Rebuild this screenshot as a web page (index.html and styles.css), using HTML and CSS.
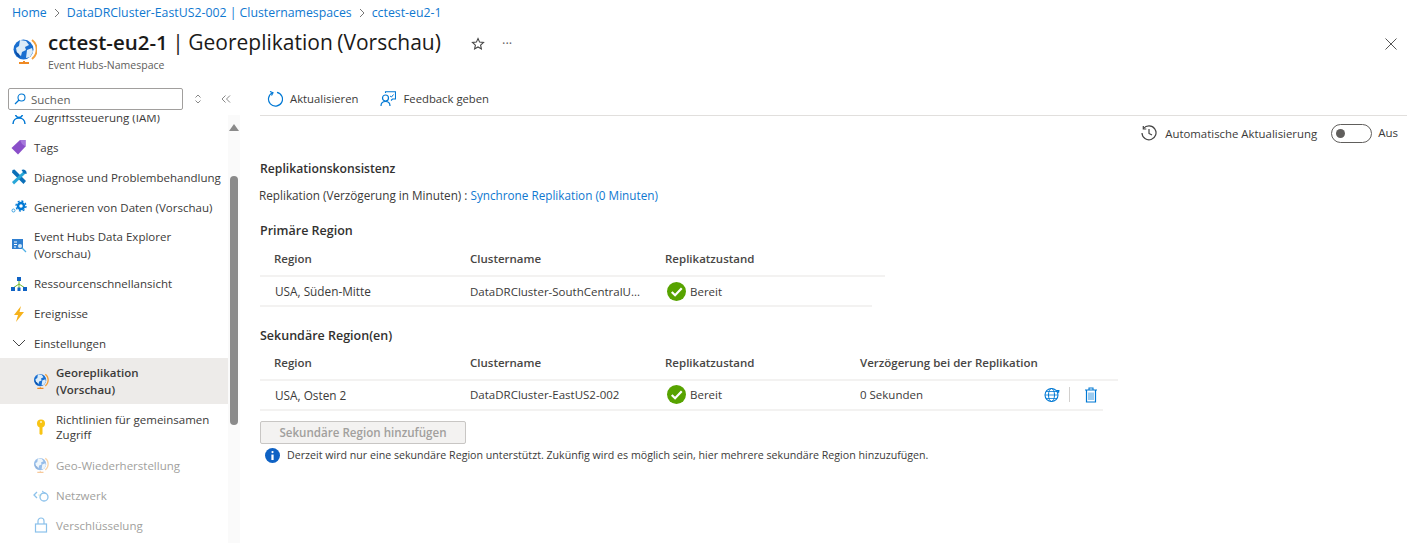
FILE: index.html
```html
<!DOCTYPE html>
<html lang="de">
<head>
    <meta charset="UTF-8">
    <title>cctest-eu2-1 | Georeplikation (Vorschau)</title>
    <link rel="stylesheet" href="styles.css">
</head>
<body>
    <svg width="0" height="0" class="defs">
        <symbol id="globe" viewBox="0 0 24 26">
            <path d="M19 2a12 12 0 0 1 0 19" fill="none" stroke="#f2a03d" stroke-width="2"/>
            <path d="M11 23v2M6 25h10" stroke="#ef8a24" stroke-width="2"/>
            <circle cx="10.5" cy="11.5" r="10" fill="#1a6fd0"/>
            <path d="M7 2l6 1 3 4-4 2 1 3-4 2-1 4-4-3-1-5 3-2zM14 12l5-2 1 4-3 5-4 1z" fill="#dcecf8"/>
            <path d="M1 12l3 6 3 2-1-4z" fill="#0b4fa8"/>
        </symbol>
    </svg>

    <nav class="breadcrumb">
        <a>Home</a>
        <svg class="crumb-sep" viewBox="0 0 6 10"><path d="M1 1l4 4-4 4" fill="none" stroke="#777" stroke-width="1"/></svg>
        <a>DataDRCluster-EastUS2-002 | Clusternamespaces</a>
        <svg class="crumb-sep" viewBox="0 0 6 10"><path d="M1 1l4 4-4 4" fill="none" stroke="#777" stroke-width="1"/></svg>
        <a>cctest-eu2-1</a>
    </nav>

    <header class="page-header">
        <svg class="header-icon"><use href="#globe"/></svg>
        <div class="header-titles">
            <h1><b>cctest-eu2-1</b> | Georeplikation (Vorschau)</h1>
            <div class="header-sub">Event Hubs-Namespace</div>
        </div>
        <svg class="star" viewBox="0 0 14 14"><path d="M7 1.5l1.600 3.600 3.900.4-2.900 2.600.8 3.800L7 10l-3.400 1.900.8-3.800L1.500 5.500l3.900-.4z" fill="none" stroke="#444" stroke-width="1.1"/></svg>
        <span class="dots">&#183;&#183;&#183;</span>
        <svg class="close" viewBox="0 0 12 12"><path d="M.5.5l11 11M11.500.5l-11 11" stroke="#555" stroke-width="1"/></svg>
    </header>

    <div class="main">
        <aside class="sidebar">
            <div class="search-row">
                <div class="search">
                    <svg viewBox="0 0 12 12" class="search-icon"><circle cx="7.5" cy="4.500" r="3.500" fill="none" stroke="#0078d4" stroke-width="1.1"/><path d="M5 7l-4 4" stroke="#0078d4" stroke-width="1.2"/></svg>
                    Suchen
                </div>
                <svg class="sort" viewBox="0 0 8 10"><path d="M1.500 3.500L4 1l2.500 2.500M1.500 6.500L4 9l2.500-2.500" fill="none" stroke="#888" stroke-width="1"/></svg>
                <svg class="collapse" viewBox="0 0 10 10"><path d="M4.500 1.500L1 5l3.500 3.500M9 1.500L5.500 5 9 8.500" fill="none" stroke="#888" stroke-width="1"/></svg>
            </div>
            <div class="menu-wrap">
                <ul class="menu">
                    <li class="menu-item">
                        <svg viewBox="0 0 16 16"><circle cx="8" cy="5" r="3.5" fill="none" stroke="#0078d4" stroke-width="1.5"/><path d="M2 15c0-4 3-6 6-6s6 2 6 6" fill="none" stroke="#0078d4" stroke-width="1.5"/></svg>
                        <span>Zugriffssteuerung (IAM)</span>
                    </li>
                    <li class="menu-item">
                        <svg viewBox="0 0 16 16"><path d="M9 1h5.500v6.500L7 15.500 .5 9z" fill="#8a4fc9"/><path d="M9 1h5.500v6.500L11 5z" fill="#a678dc"/></svg>
                        <span>Tags</span>
                    </li>
                    <li class="menu-item">
                        <svg viewBox="0 0 16 16"><path d="M1.500 1l2-.5L15 12l-2.500 3L1 3.500z" fill="#0b6fb8"/><path d="M13.500 1.500L1 13l2 2.500L15 4z" fill="#29a7d8"/><path d="M10.500 1a3.500 3.500 0 0 1 5 4l-3-1z" fill="#0b6fb8"/></svg>
                        <span>Diagnose und Problembehandlung</span>
                    </li>
                    <li class="menu-item">
                        <svg viewBox="0 0 16 16"><circle cx="10" cy="7" r="3" fill="none" stroke="#0078d4" stroke-width="2.5"/><circle cx="10" cy="7" r="5" fill="none" stroke="#0078d4" stroke-width="1.3" stroke-dasharray="2 1.9"/><circle cx="2.500" cy="11.5" r="1.5" fill="none" stroke="#3aa0e0"/></svg>
                        <span>Generieren von Daten (Vorschau)</span>
                    </li>
                    <li class="menu-item tall">
                        <svg viewBox="0 0 16 16"><path d="M1 2h11v10H1z" fill="#2f7fd0"/><path d="M3 5h3M3 7.500h3M3 10h2" stroke="#fff" stroke-width="1"/><circle cx="9" cy="9" r="2" fill="#cfe7f7"/><path d="M11 11l4 4" stroke="#4fb0e6" stroke-width="1.3"/></svg>
                        <span>Event Hubs Data Explorer<br>(Vorschau)</span>
                    </li>
                    <li class="menu-item">
                        <svg viewBox="0 0 16 16"><path d="M8 4v4M2 12l6-4 6 4M8 8v5" fill="none" stroke="#6fb52c" stroke-width="1"/><path d="M6 1h4v4H6zM0 11h4v4H0zM12 11h4v4h-4zM6.500 11.500h3V15h-3z" fill="#0f62c4"/></svg>
                        <span>Ressourcenschnellansicht</span>
                    </li>
                    <li class="menu-item">
                        <svg viewBox="0 0 16 16"><path d="M10 0L3 9h4l-2 7 8-10H8.500z" fill="#f6b21b"/></svg>
                        <span>Ereignisse</span>
                    </li>
                    <li class="menu-item group">
                        <svg class="chev" viewBox="0 0 16 16"><path d="M2 5l6 6 6-6" fill="none" stroke="#444" stroke-width="1"/></svg>
                        <span>Einstellungen</span>
                    </li>
                    <li class="menu-item sub tall active">
                        <svg><use href="#globe"/></svg>
                        <span>Georeplikation<br>(Vorschau)</span>
                    </li>
                    <li class="menu-item sub tall">
                        <svg viewBox="0 0 16 16"><circle cx="8" cy="4.500" r="4" fill="#f8c414"/><path d="M6.500 7h3v8L8 16l-1.500-1z" fill="#f8c414"/><circle cx="8" cy="3" r="1" fill="#fff3c4"/></svg>
                        <span class="tight">Richtlinien für gemeinsamen<br>Zugriff</span>
                    </li>
                    <li class="menu-item sub disabled">
                        <svg><use href="#globe"/></svg>
                        <span>Geo-Wiederherstellung</span>
                    </li>
                    <li class="menu-item sub disabled">
                        <svg viewBox="0 0 16 16"><path d="M4 5L1 8l3 3" fill="none" stroke="#0078d4" stroke-width="1.3"/><path d="M5.500 8h3" stroke="#6fb52c" stroke-dasharray="1 1"/><circle cx="11" cy="10" r="4" fill="none" stroke="#0078d4" stroke-width="1.3"/><path d="M9 4l3 2" stroke="#0078d4"/></svg>
                        <span>Netzwerk</span>
                    </li>
                    <li class="menu-item sub disabled">
                        <svg viewBox="0 0 16 16"><rect x="2.500" y="7" width="11" height="8" fill="none" stroke="#0078d4" stroke-width="1.2"/><path d="M5 7V4a3 3 0 0 1 6 0v3" fill="none" stroke="#0078d4" stroke-width="1.2"/></svg>
                        <span>Verschlüsselung</span>
                    </li>
                </ul>
                <div class="scrollbar">
                    <div class="scroll-up"></div>
                    <div class="scroll-thumb"></div>
                </div>
            </div>
        </aside>

        <main class="content">
            <div class="toolbar">
                <button class="tool-btn">
                    <svg viewBox="0 0 16 16"><path d="M5.500 1.800A7 7 0 1 0 10 1.300" fill="none" stroke="#0078d4" stroke-width="1.2"/><path d="M3 .5l3 1.200L4.500 4.500" fill="none" stroke="#0078d4" stroke-width="1.2"/></svg>
                    Aktualisieren
                </button>
                <button class="tool-btn">
                    <svg viewBox="0 0 16 16"><circle cx="5.500" cy="7" r="3" fill="none" stroke="#0078d4" stroke-width="1.2"/><path d="M1 15c0-3 2-4.500 4.500-4.500S10 12 10 15" fill="none" stroke="#0078d4" stroke-width="1.2"/><path d="M5.500 2V.8h10V8h-3L11 9.500" fill="none" stroke="#0078d4" stroke-width="1.1"/><path d="M10 5l1.500 1 2-2.500" fill="none" stroke="#0078d4"/></svg>
                    Feedback geben
                </button>
            </div>

            <div class="refresh-row">
                <svg class="history" viewBox="0 0 16 16"><path d="M2.500 3.500A7 7 0 1 1 1 8" fill="none" stroke="#444" stroke-width="1.2"/><path d="M2.300 1v3h3M8 4v4.500l3 1.500" fill="none" stroke="#444" stroke-width="1.2"/></svg>
                <span class="refresh-label">Automatische Aktualisierung</span>
                <span class="toggle"><i></i></span>
                <span class="toggle-state">Aus</span>
            </div>

            <h2 class="consistency">Replikationskonsistenz</h2>
            <p class="consistency-text">Replikation (Verzögerung in Minuten) : <a>Synchrone Replikation (0 Minuten)</a></p>

            <h2 class="region-title first">Primäre Region</h2>
            <div class="grid-head primary">
                <div>Region</div><div>Clustername</div><div>Replikatzustand</div>
            </div>
            <div class="grid-row primary">
                <div class="region-name">USA, Süden-Mitte</div>
                <div>DataDRCluster-SouthCentralU...</div>
                <div class="status"><svg viewBox="0 0 20 20"><circle cx="10" cy="10" r="10" fill="#57a300"/><path d="M5 10.500l3.500 3.500 7-7.500" fill="none" stroke="#fff" stroke-width="2.3"/></svg>Bereit</div>
            </div>

            <h2 class="region-title second">Sekundäre Region(en)</h2>
            <div class="grid-head secondary">
                <div>Region</div><div>Clustername</div><div>Replikatzustand</div><div>Verzögerung bei der Replikation</div>
            </div>
            <div class="grid-row secondary">
                <div class="region-name">USA, Osten 2</div>
                <div>DataDRCluster-EastUS2-002</div>
                <div class="status"><svg viewBox="0 0 20 20"><circle cx="10" cy="10" r="10" fill="#57a300"/><path d="M5 10.500l3.500 3.500 7-7.500" fill="none" stroke="#fff" stroke-width="2.3"/></svg>Bereit</div>
                <div>0 Sekunden</div>
                <div class="row-actions">
                    <svg viewBox="0 0 16 16"><circle cx="7.500" cy="8" r="6.500" fill="none" stroke="#0078d4" stroke-width="1.1"/><ellipse cx="7.500" cy="8" rx="3" ry="6.500" fill="none" stroke="#0078d4"/><path d="M1 8h13M2 4.500h11M2 11.500h11" stroke="#0078d4" stroke-width=".8"/><path d="M12 3h3.500L15 6.500z" fill="#0078d4"/></svg>
                    <span class="action-sep"></span>
                    <svg viewBox="0 0 14 16"><path d="M1 3h12M5 3V1h4v2" fill="none" stroke="#0078d4" stroke-width="1.1"/><path d="M2.500 3v12h9V3" fill="none" stroke="#0078d4" stroke-width="1.2"/><path d="M5 5.500V13M7 5.500V13M9 5.500V13" stroke="#5aa9e6" stroke-width="1.2"/></svg>
                </div>
            </div>

            <button class="add-btn" disabled>Sekundäre Region hinzufügen</button>
            <div class="info">
                <svg viewBox="0 0 16 16"><circle cx="8" cy="8" r="8" fill="#0f62c4"/><circle cx="8" cy="4.300" r="1.200" fill="#fff"/><path d="M6.800 7h2.400v5.800H6.800z" fill="#fff"/></svg>
                Derzeit wird nur eine sekundäre Region unterstützt. Zukünfig wird es möglich sein, hier mehrere sekundäre Region hinzuzufügen.
            </div>
        </main>
    </div>
</body>
</html>
```

FILE: styles.css
```css
* {
    box-sizing: border-box;
}

html, body {
    height: 100%;
}

body {
    margin: 0;
    overflow: hidden;
    background-color: #ffffff;
    color: #3b3a39;
    font-family: "Open Sans", "Noto Sans", sans-serif;
    font-size: 11.5px;
    display: flex;
    flex-direction: column;
}

.defs {
    position: absolute;
}

a {
    color: #0f78d0;
}

/* breadcrumb */
.breadcrumb {
    height: 25px;
    padding-left: 12px;
    font-size: 12.3px;
    display: flex;
    align-items: center;
    white-space: nowrap;
}

.crumb-sep {
    width: 6px;
    height: 10px;
    margin: 0 7px;
}

/* header */
.page-header {
    height: 60px;
    display: flex;
    align-items: flex-start;
    padding-left: 13px;
    position: relative;
}

.header-icon {
    width: 24px;
    height: 26px;
    margin-top: 13px;
    flex: none;
}

.header-titles {
    margin-left: 11px;
    width: 422px;
}

h1 {
    margin: 0;
    padding-top: 3px;
    font-size: 21px;
    line-height: 28px;
    font-weight: 400;
    word-spacing: -1px;
    color: #1b1a19;
    white-space: nowrap;
}

h1 b {
    font-size: 20.5px;
    font-weight: 600;
}

.header-sub {
    margin-top: 1px;
    font-size: 10.5px;
    line-height: 16px;
    color: #605e5c;
}

.star {
    width: 14px;
    height: 14px;
    margin: 12px 0 0 1px;
}

.dots {
    margin: 9px 0 0 17px;
    font-size: 13px;
    color: #666;
}

.close {
    width: 12px;
    height: 12px;
    position: absolute;
    top: 13px;
    right: 20px;
}

/* layout */
.main {
    flex: 1;
    display: flex;
    min-height: 0;
}

.sidebar {
    width: 240px;
    flex: none;
    display: flex;
    flex-direction: column;
}

.search-row {
    height: 30px;
    padding: 3px 0 0 8px;
    display: flex;
    align-items: flex-start;
}

.search {
    width: 175px;
    height: 22px;
    border: 1px solid #a19f9d;
    border-radius: 2px;
    display: flex;
    align-items: center;
    padding-left: 5px;
    gap: 5px;
    color: #605e5c;
}

.search-icon {
    width: 12px;
    height: 12px;
}

.sort {
    width: 8px;
    height: 10px;
    margin: 6px 0 0 11px;
}

.collapse {
    width: 10px;
    height: 10px;
    margin: 6px 0 0 19px;
}

.menu-wrap {
    flex: 1;
    display: flex;
    overflow: hidden;
    min-height: 0;
}

.menu {
    list-style: none;
    margin: -13px 0 0;
    padding: 0;
    width: 228px;
    flex: none;
}

.menu-item {
    height: 30px;
    display: flex;
    align-items: center;
    padding-left: 11px;
    gap: 7px;
    line-height: 17px;
    white-space: nowrap;
}

.menu-item svg {
    width: 16px;
    height: 16px;
    flex: none;
}

.menu-item.tall {
    height: 46.5px;
}

.menu-item.group {
    height: 29px;
}

.menu-item.active {
    height: 46px;
}

.menu-item.sub {
    padding-left: 33px;
}

.menu-item.active {
    background-color: #edebe9;
    font-weight: 600;
}

.tight {
    line-height: 15px;
}

.menu-item.disabled {
    color: #a19f9d;
}

.menu-item.disabled svg {
    opacity: 0.45;
}

.scrollbar {
    width: 12px;
    background-color: #fafafa;
    display: flex;
    flex-direction: column;
    align-items: center;
}

.scroll-up {
    width: 0;
    height: 0;
    margin-top: 9px;
    border-left: 5px solid transparent;
    border-right: 5px solid transparent;
    border-bottom: 7px solid #8a8a8a;
}

.scroll-thumb {
    width: 8px;
    height: 249px;
    margin-top: 45px;
    border-radius: 4px;
    background-color: #8a8a8a;
}

/* content */
.content {
    flex: 1;
    padding: 0 10px 0 20px;
    min-width: 0;
}

.toolbar {
    height: 31px;
    padding: 0 0 3px 7px;
    border-bottom: 1px solid #e1dfdd;
    display: flex;
    align-items: center;
    gap: 22px;
}

.tool-btn {
    border: none;
    background: none;
    padding: 0;
    font: inherit;
    font-size: 11.3px;
    color: #3b3a39;
    display: flex;
    align-items: center;
    gap: 7px;
}

.tool-btn svg {
    width: 16px;
    height: 16px;
}

.refresh-row {
    height: 34px;
    display: flex;
    align-items: center;
    justify-content: flex-end;
    padding-right: 9px;
}

.history {
    width: 16px;
    height: 16px;
}

.refresh-label {
    margin: 0 14px 0 8px;
    font-size: 11.4px;
}

.toggle {
    width: 41px;
    height: 19px;
    border: 1px solid #605e5c;
    border-radius: 10px;
    display: flex;
    align-items: center;
    padding-left: 4px;
}

.toggle i {
    width: 9px;
    height: 9px;
    border-radius: 50%;
    background-color: #605e5c;
}

.toggle-state {
    margin: 0 0 2px 6px;
}

h2 {
    margin: 0;
    font-size: 12.5px;
    font-weight: 600;
    line-height: 18px;
    color: #323130;
}

.consistency {
    margin-top: 10px;
    font-size: 12.2px;
}

.consistency-text {
    margin: 8px 0 0 -1px;
    font-size: 11.73px;
    line-height: 18px;
}

.region-title.first {
    margin-top: 18px;
}

.region-title.second {
    margin-top: 20px;
}

.grid-head, .grid-row {
    display: grid;
    align-items: center;
    padding-left: 14px;
}

.primary {
    grid-template-columns: 196px 195px 1fr;
}

.secondary {
    grid-template-columns: 196px 195px 195px 1fr auto;
}

.grid-head {
    height: 34px;
    margin-top: 3px;
    padding-bottom: 2px;
    border-bottom: 2px solid #f3f2f1;
    font-weight: 600;
    color: #484644;
}

.grid-head.primary {
    width: 625px;
}

.grid-head.secondary {
    width: 858px;
    height: 33px;
}

.grid-row {
    height: 30px;
    border-bottom: 2px solid #f3f2f1;
}

.grid-row.primary {
    width: 612px;
}

.grid-row.secondary {
    width: 843px;
    padding-bottom: 1px;
}

.region-name {
    padding-left: 1px;
    font-size: 11.8px;
}

.status {
    display: flex;
    align-items: center;
    gap: 4px;
    padding-left: 2px;
}

.status svg {
    width: 19px;
    height: 19px;
}

.row-actions {
    display: flex;
    align-items: center;
    padding-right: 4px;
}

.row-actions svg {
    width: 16px;
    height: 16px;
}

.action-sep {
    width: 1px;
    height: 15px;
    margin: 0 13px 0 9px;
    background-color: #d2d0ce;
}

.add-btn {
    display: block;
    width: 206px;
    height: 23px;
    margin-top: 10px;
    padding: 0;
    border: 1px solid #c8c6c4;
    border-radius: 2px;
    background-color: #f3f2f1;
    font: inherit;
    font-size: 11.6px;
    font-weight: 600;
    color: #a19f9d;
}

.info {
    margin-top: 3px;
    padding-left: 5px;
    display: flex;
    align-items: center;
    gap: 7px;
    height: 16px;
    font-size: 10.65px;
    white-space: nowrap;
}

.info svg {
    width: 15px;
    height: 15px;
    flex: none;
}
```
